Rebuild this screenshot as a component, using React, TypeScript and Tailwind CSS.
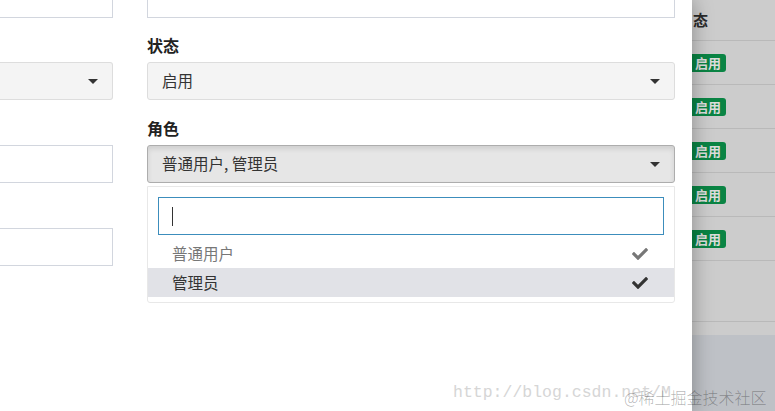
import {FaCheck} from 'react-icons/fa';

const font = "font-['Noto_Sans_CJK_SC','Noto_Sans',sans-serif]";

function Caret() {
  return (
    <span className="h-0 w-0 border-x-[5px] border-t-[5px] border-x-transparent border-t-[#333]" />
  );
}

function LeftColumn() {
  return (
    <div className="flex w-[113px] shrink-0 flex-col">
      <div className="h-[18px] border border-l-0 border-t-0 border-[#d2d6de]" />
      <div className="mt-[44px] flex h-[38px] items-center justify-end rounded-r-[3px] border border-l-0 border-[#ddd] bg-[#f4f4f4] pr-[14px]">
        <Caret />
      </div>
      <div className="mt-[45px] h-[38px] border border-l-0 border-[#d2d6de]" />
      <div className="mt-[45px] h-[38px] border border-l-0 border-[#d2d6de]" />
    </div>
  );
}

interface OptionProps {
  label: string;
  active?: boolean;
}
function RoleOption({label, active}: OptionProps) {
  return (
    <div
      className={
        active
          ? 'flex h-[29px] items-center justify-between bg-[#e1e2e7] pl-[24px] pr-[26px] text-[#333]'
          : 'flex h-[29px] items-center justify-between pl-[24px] pr-[26px] text-[#777]'
      }
    >
      <span>{label}</span>
      <FaCheck size={16} />
    </div>
  );
}

function RightColumn() {
  return (
    <div className="flex w-[528px] shrink-0 flex-col text-[15.5px] text-[#333]">
      <div className="h-[18px] border border-t-0 border-[#d2d6de]" />
      <label className="mt-[17px] mb-[7px] h-[20px] text-[16px] leading-[20px] font-bold text-[#222]">
        状态
      </label>
      <div className="flex h-[38px] items-center justify-between rounded-[3px] border border-[#ddd] bg-[#f4f4f4] px-[14px]">
        <span>启用</span>
        <Caret />
      </div>
      <label className="mt-[18px] mb-[7px] h-[20px] text-[16px] leading-[20px] font-bold text-[#222]">
        角色
      </label>
      <div className="flex h-[38px] items-center justify-between rounded-[3px] border border-[#adadad] bg-[#e6e6e6] px-[14px] shadow-[inset_0_3px_5px_rgba(0,0,0,0.1)]">
        <span>普通用户, 管理员</span>
        <Caret />
      </div>
      <div className="mt-[3px] rounded-b-[3px] border border-[#e8e8e8] bg-white pt-[10px] pb-[5px]">
        <div className="mx-[10px] mb-[4px] flex h-[38px] items-center border border-[#3c8dbc] pl-[13px]">
          <span className="h-[19px] w-px bg-[#333]" />
        </div>
        <RoleOption label="普通用户" />
        <RoleOption label="管理员" active />
      </div>
    </div>
  );
}

function BackdropRow() {
  return (
    <div className="flex h-[44px] items-center border-b border-[#b9b9b9]">
      <span className="-ml-[14px] flex h-[18px] items-center gap-[3px] rounded-[3px] bg-[#0a8444] pr-[5px] pl-[6px] text-[13px] font-bold text-[#dcdcdc]">
        <FaCheck size={8} className="text-[#c9c28a]" />
        启用
      </span>
    </div>
  );
}

export default function App() {
  return (
    <div
      className={`relative flex h-[411px] w-[775px] overflow-hidden bg-[#cccccc] ${font}`}
    >
      <div className="relative z-10 flex w-[692px] shrink-0 gap-[34px] bg-white shadow-[2px_0_18px_rgba(0,0,0,0.28)]">
        <LeftColumn />
        <RightColumn />
      </div>
      <div className="flex flex-1 flex-col">
        <div className="flex h-[41px] items-center border-b border-[#b9b9b9] pl-px text-[15px] font-bold text-[#2a2a2a]">
          态
        </div>
        <BackdropRow />
        <BackdropRow />
        <BackdropRow />
        <BackdropRow />
        <BackdropRow />
        <div className="h-[61px] border-b border-[#b9b9b9]" />
        <div className="h-[13px]" />
        <div className="flex-1 bg-[#bec1c6]" />
      </div>
      <span className="absolute top-[381px] left-[453px] z-20 font-['Liberation_Mono',monospace] text-[16.5px] whitespace-nowrap text-[#d6d6d6]">
        http://blog.csdn.net/M
      </span>
      <span className="absolute top-[385px] left-[624px] z-20 bg-white/0 text-[16px] font-light whitespace-nowrap text-black/30">
        @稀土掘金技术社区
      </span>
    </div>
  );
}
